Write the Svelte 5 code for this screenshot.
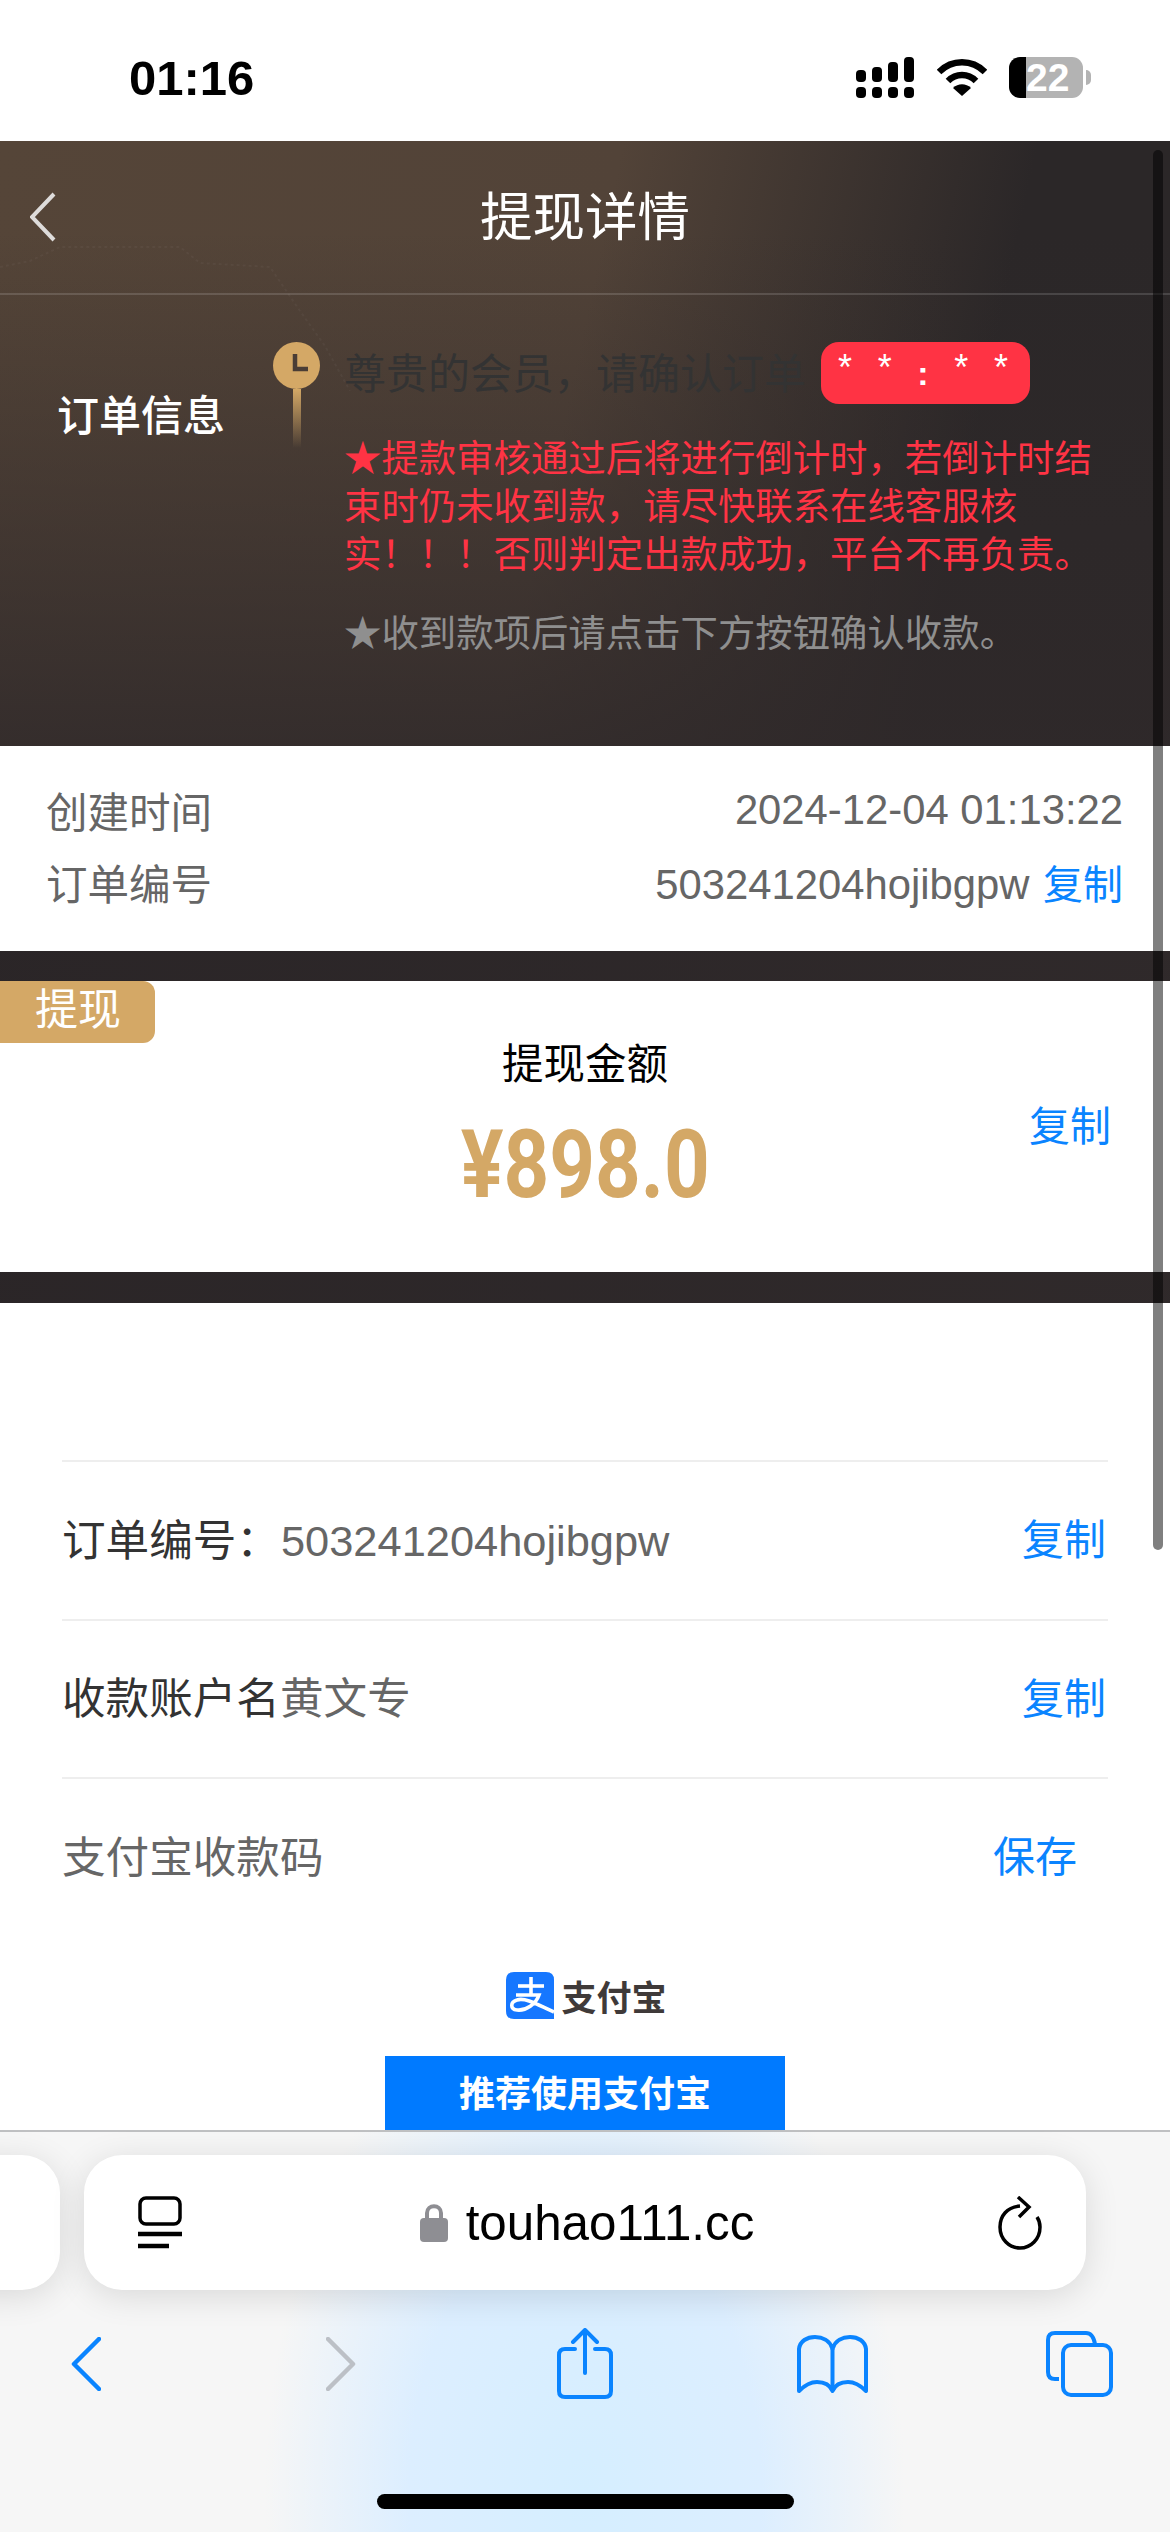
<script>
	const signal = [
		{ x: 0, y: 13, h: 12 },
		{ x: 16, y: 10, h: 15 },
		{ x: 32, y: 5, h: 20 },
		{ x: 48, y: 0, h: 25 }
	];
</script>

<div class="page">
	<div class="status">
		<span class="time">01:16</span>
		<div class="status-icons">
			<svg width="58" height="41" viewBox="0 0 58 41">
				{#each signal as s}
					<rect x={s.x} y={s.y} width="10" height={s.h} rx="4" />
					<rect x={s.x} y="30" width="10" height="11" rx="4" />
				{/each}
			</svg>
			<svg class="wifi" width="50" height="38" viewBox="0 0 50 38" fill="none" stroke="#000">
				<path d="M2 14 C15 1 35 1 48 14" stroke-width="6.5" />
				<path d="M11 23 C19 15 31 15 39 23" stroke-width="6.5" />
				<path d="M25 38 L16 30 C21 25 29 25 34 30 Z" fill="#000" stroke="none" />
			</svg>
			<div class="battery">
				<div class="battery-used"></div>
				<div class="battery-rest">22</div>
				<div class="battery-nub"></div>
			</div>
		</div>
	</div>

	<div class="scroll">
		<div class="hero">
			<svg class="map" width="420" height="190" viewBox="0 0 420 190" fill="none">
				<path d="M0 66 L30 60 L60 46 L180 46 L200 62 L270 66 L300 110 L325 145 L350 190" stroke="#fff" stroke-opacity="0.035" stroke-width="2" stroke-dasharray="3 3" />
			</svg>
			<header class="nav">
				<svg class="back" width="26" height="50" viewBox="0 0 26 50" fill="none">
					<path d="M24 2 L2 25 L24 48" stroke="#dedcdb" stroke-width="4" />
				</svg>
				<h1>提现详情</h1>
				<span></span>
			</header>
			<div class="info">
				<div class="info-label">订单信息</div>
				<div class="timeline">
					<svg width="47" height="47" viewBox="0 0 47 47">
						<circle cx="23.5" cy="23.5" r="23.5" fill="#d4a866" />
						<path d="M22 12 V27 H35" fill="none" stroke="#4a3d35" stroke-width="4.5" />
					</svg>
					<div class="stem"></div>
				</div>
				<div class="info-text">
					<div class="greeting">尊贵的会员，请确认订单</div>
					<div class="countdown">
						<span>*</span><span>*</span><span class="colon">:</span><span>*</span><span>*</span>
					</div>
					<p class="warn">★提款审核通过后将进行倒计时，若倒计时结束时仍未收到款，请尽快联系在线客服核实！！！否则判定出款成功，平台不再负责。</p>
					<p class="hint">★收到款项后请点击下方按钮确认收款。</p>
				</div>
			</div>
		</div>

		<section class="times">
			<div class="time-row">
				<span>创建时间</span>
				<span class="val">2024-12-04 01:13:22</span>
			</div>
			<div class="time-row">
				<span>订单编号</span>
				<span class="val">503241204hojibgpw <a href="#copy">复制</a></span>
			</div>
		</section>

		<div class="band"></div>

		<section class="amount">
			<div class="tag">提现</div>
			<div class="amount-title">提现金额</div>
			<div class="amount-num"><span>¥898.0</span></div>
			<a class="amount-copy" href="#copy">复制</a>
		</section>

		<div class="band band-2"></div>

		<section class="pay">
			<div class="pay-row">
				<span class="pay-label">订单编号：<span class="pay-val first">503241204hojibgpw</span></span>
				<a href="#copy">复制</a>
			</div>
			<div class="pay-row">
				<span class="pay-label">收款账户名<span class="pay-val">黄文专</span></span>
				<a href="#copy">复制</a>
			</div>
			<div class="pay-row last">
				<span class="pay-val">支付宝收款码</span>
				<a class="save" href="#save">保存</a>
			</div>

			<div class="alipay">
				<svg width="48" height="47" viewBox="0 0 48 47" fill="none">
					<path d="M8 0 H40 Q48 0 48 8 V47 H8 Q0 47 0 39 V8 Q0 0 8 0 Z" fill="#1677ff" />
					<g stroke="#fff" stroke-width="3.6">
						<path d="M12 14 H38" />
						<path d="M25 5 V22" />
						<path d="M10 23 H33 C30 32 20 39 11 38 C4 37 4 30 11 28 C20 25 34 34 48 40" />
					</g>
				</svg>
				<span>支付宝</span>
			</div>
			<div class="recommend">推荐使用支付宝</div>
		</section>
	</div>

	<div class="scrollbar"></div>

	<div class="toolbar">
		<div class="url-row">
			<div class="pill-prev"></div>
			<div class="pill">
				<svg width="44" height="53" viewBox="0 0 44 53" fill="none" stroke="#000">
					<rect x="2" y="2" width="40" height="26" rx="6" stroke-width="3.5" />
					<path d="M0 38 H44" stroke-width="4.5" />
					<path d="M0 50 H31" stroke-width="4.5" />
				</svg>
				<div class="address">
					<svg width="28" height="39" viewBox="0 0 28 39">
						<path d="M7 18 V10 C7 1 21 1 21 10 V18" fill="none" stroke="#8e8e93" stroke-width="4" />
						<rect y="15" width="28" height="24" rx="4" fill="#8e8e93" />
					</svg>
					<span>touhao111.cc</span>
				</div>
				<svg width="44" height="54" viewBox="0 0 44 54" fill="none" stroke="#000" stroke-width="3.5">
					<path d="M22 10 C9 11 2 20 2 31 C2 43 11 52 22 52 C33 52 42 43 42 31 C42 27 41 24 39 21" />
					<path d="M20 1 L31 11 L21 21" />
				</svg>
			</div>
		</div>

		<div class="tools">
			<svg class="t-back" width="30" height="54" viewBox="0 0 30 54" fill="none" stroke="#0a84ff" stroke-width="4.5" stroke-linecap="round" stroke-linejoin="round">
				<path d="M28 2 L3 27 L28 52" />
			</svg>
			<svg class="t-fwd" width="30" height="54" viewBox="0 0 30 54" fill="none" stroke="#bcc0c6" stroke-width="4.5" stroke-linecap="round" stroke-linejoin="round">
				<path d="M2 2 L27 27 L2 52" />
			</svg>
			<svg class="t-share" width="56" height="71" viewBox="0 0 56 71" fill="none" stroke="#0a84ff" stroke-width="4" stroke-linecap="round" stroke-linejoin="round">
				<path d="M18 21 H8 Q2 21 2 27 V63 Q2 69 8 69 H48 Q54 69 54 63 V27 Q54 21 48 21 H38" />
				<path d="M28 45 V3" />
				<path d="M16 14 L28 2 L40 14" />
			</svg>
			<svg class="t-book" width="71" height="58" viewBox="0 0 71 58" fill="none" stroke="#0a84ff" stroke-width="4" stroke-linejoin="round">
				<path d="M35.5 14 C33 5 25 2 18 2 C10 2 3 6 2 14 V56 C8 50 14 47 20 47 C27 47 33 50 35.5 56 C38 50 44 47 51 47 C57 47 63 50 69 56 V14 C68 6 61 2 53 2 C46 2 38 5 35.5 14 Z" />
				<path d="M35.5 14 V54" />
			</svg>
			<svg class="t-tabs" width="67" height="66" viewBox="0 0 67 66" fill="none" stroke="#0a84ff" stroke-width="4">
				<path d="M13 48 H9 Q2 48 2 41 V9 Q2 2 9 2 H40 Q47 2 49 13" />
				<rect x="17" y="14" width="48" height="50" rx="8" />
			</svg>
		</div>

		<div class="home"></div>
	</div>
</div>

<style>
	:global(body) {
		margin: 0;
		background: #fff;
	}

	.page {
		position: relative;
		width: 1170px;
		height: 2532px;
		display: flex;
		flex-direction: column;
		overflow: hidden;
		font-family: 'Liberation Sans', 'Noto Sans CJK SC', sans-serif;
	}

	a {
		color: #0a84ff;
		text-decoration: none;
	}

	/* status bar */
	.status {
		height: 141px;
		flex: none;
		background: #fff;
		display: flex;
		justify-content: space-between;
		padding: 57px 87px 0 129px;
		box-sizing: border-box;
	}

	.time {
		font-size: 49px;
		font-weight: 700;
		line-height: 42px;
		color: #000;
	}

	.status-icons {
		display: flex;
		align-items: flex-start;
		gap: 23px;
		height: 41px;
	}

	.wifi {
		margin-top: 1px;
	}

	.battery {
		display: flex;
		position: relative;
		width: 74px;
		height: 41px;
		margin-left: -1px;
	}

	.battery-used {
		width: 17px;
		background: #000;
		border-radius: 11px 0 0 11px;
	}

	.battery-rest {
		flex: 1;
		background: #b3b3b3;
		border-radius: 0 11px 11px 0;
		color: #fff;
		font-size: 39px;
		font-weight: 700;
		line-height: 41px;
	}

	.battery-nub {
		position: absolute;
		left: 77px;
		top: 13px;
		width: 5px;
		height: 15px;
		background: #b3b3b3;
		border-radius: 0 8px 8px 0;
	}

	/* scrolled page */
	.scroll {
		flex: 1;
		min-height: 0;
		overflow: hidden;
		background: linear-gradient(100deg, #2a2527, #302a2b);
	}

	.hero {
		position: relative;
		height: 605px;
		background:
			linear-gradient(to bottom, rgba(47, 41, 42, 0) 15%, rgba(47, 41, 42, 0.85) 100%),
			linear-gradient(102deg, #554538 0%, #524338 48%, #2b2728 80%, #2b2728 100%);
	}

	.map {
		position: absolute;
		left: 0;
		top: 60px;
	}

	.nav {
		position: relative;
		height: 154px;
		box-sizing: border-box;
		border-bottom: 2px solid rgba(255, 255, 255, 0.14);
		display: grid;
		grid-template-columns: 1fr auto 1fr;
		align-items: center;
	}

	.back {
		margin: -1px 0 0 30px;
	}

	h1 {
		margin: 2px 0 0;
		font-size: 52.5px;
		font-weight: 400;
		color: #fff;
		line-height: 60px;
	}

	.info {
		position: relative;
		display: flex;
		padding: 47px 0 0 57px;
	}

	.info-label {
		width: 216px;
		flex: none;
		margin-top: 47px;
		font-size: 42px;
		line-height: 56px;
		font-weight: 500;
		color: #fff;
	}

	.timeline {
		width: 47px;
		flex: none;
		display: flex;
		flex-direction: column;
		align-items: center;
	}

	.timeline svg {
		display: block;
	}

	.stem {
		width: 8px;
		height: 59px;
		background: linear-gradient(to bottom, #d4a866, rgba(212, 168, 102, 0));
	}

	.info-text {
		position: relative;
		width: 760px;
		margin-left: 24px;
		padding-top: 4px;
	}

	.greeting {
		font-size: 42px;
		line-height: 58px;
		color: #333;
	}

	.countdown {
		position: absolute;
		left: 477px;
		top: 0;
		width: 209px;
		height: 62px;
		background: #ff3344;
		border-radius: 18px;
		display: flex;
		justify-content: space-between;
		padding: 8px 22px 0 17px;
		box-sizing: border-box;
		color: #fff;
		font-size: 36px;
		line-height: 36px;
	}

	.colon {
		font-size: 34px;
		margin-top: 5px;
		font-weight: 700;
	}

	.warn {
		margin: 31px 0 0;
		font-size: 37.4px;
		line-height: 48px;
		color: #ff3344;
	}

	.hint {
		margin: 31px 0 0;
		font-size: 37.4px;
		line-height: 48px;
		color: #8f8f8f;
	}

	/* order times */
	.times {
		background: #fff;
		height: 205px;
		box-sizing: border-box;
		padding: 28px 47px 0 46px;
	}

	.time-row {
		display: flex;
		justify-content: space-between;
		align-items: center;
		height: 72px;
		font-size: 41.5px;
		color: #666;
	}

	.val {
		font-size: 41.8px;
	}

	.val a {
		font-size: 40px;
		margin-left: 2px;
	}

	.band {
		height: 30px;
	}

	.band-2 {
		height: 31px;
	}

	/* amount */
	.amount {
		position: relative;
		background: #fff;
		height: 291px;
		box-sizing: border-box;
		padding: 55px 59px 0 0;
		display: grid;
		grid-template-columns: 1fr 246px 1fr;
		grid-template-rows: 58px 116px;
		justify-items: center;
	}

	.tag {
		position: absolute;
		left: 0;
		top: 0;
		width: 155px;
		height: 62px;
		box-sizing: border-box;
		padding-left: 35px;
		background: #d4a866;
		border-radius: 0 12px 12px 0;
		color: #fff;
		font-size: 43px;
		line-height: 58px;
	}

	.amount-title {
		grid-column: 2;
		margin-left: 59px;
		font-size: 41.5px;
		line-height: 58px;
		color: #000;
		white-space: nowrap;
	}

	.amount-num {
		grid-column: 2;
		grid-row: 2;
		margin: 13px 0 0 59px;
		font-size: 95px;
		font-weight: 700;
		font-family: Roboto, 'Liberation Sans', sans-serif;
		line-height: 116px;
		color: #d4a866;
		white-space: nowrap;
	}

	.amount-num span {
		display: inline-block;
		transform: scaleX(0.84);
	}

	.amount-copy {
		grid-column: 3;
		grid-row: 1 / span 2;
		justify-self: end;
		align-self: center;
		margin-top: 8px;
		font-size: 41px;
		line-height: 58px;
	}

	/* payment details */
	.pay {
		background: #fff;
		padding: 157px 62px 0 62px;
		height: 900px;
		box-sizing: border-box;
	}

	.pay-row {
		height: 158.5px;
		box-sizing: border-box;
		border-top: 2px solid #eee;
		padding-bottom: 7px;
		display: flex;
		justify-content: space-between;
		align-items: center;
		font-size: 43.6px;
		color: #333;
	}

	.pay-row a {
		margin-right: 2px;
		font-size: 42px;
	}

	.pay-row a.save {
		margin-right: 31px;
	}

	.pay-val {
		color: #666;
	}

	.pay-val.first {
		margin-left: 1px;
		font-size: 43.4px;
	}

	.alipay {
		margin-top: 36px;
		display: flex;
		justify-content: center;
		align-items: center;
		gap: 7px;
		height: 47px;
		padding-left: 3px;
		font-size: 35px;
		font-weight: 700;
		color: #3f3a39;
	}

	.recommend {
		margin: 37px auto 0 323px;
		width: 400px;
		height: 100px;
		padding-top: 12px;
		box-sizing: border-box;
		background: #007aff;
		color: #fff;
		font-size: 36px;
		font-weight: 700;
		line-height: 54px;
		text-align: center;
	}

	/* page scroll indicator */
	.scrollbar {
		position: absolute;
		left: 1153px;
		top: 150px;
		width: 10px;
		height: 1400px;
		border-radius: 5px;
		background: rgba(0, 0, 0, 0.5);
	}

	/* safari chrome */
	.toolbar {
		position: relative;
		flex: none;
		height: 402px;
		box-sizing: border-box;
		border-top: 2px solid #bfc0c2;
		background:
			radial-gradient(ellipse 320px 520px at 50% 90%, #d5eeff 0%, #dceeff 55%, rgba(226, 240, 255, 0) 100%),
			#f6f6f6;
	}

	.url-row {
		display: flex;
		gap: 24px;
		padding-top: 23px;
		margin-left: -140px;
	}

	.pill-prev,
	.pill {
		height: 135px;
		border-radius: 38px;
		background: #fff;
		box-shadow: 0 6px 34px rgba(0, 0, 0, 0.12);
		flex: none;
	}

	.pill-prev {
		width: 200px;
	}

	.pill {
		width: 1002px;
		box-sizing: border-box;
		padding: 0 44px 0 54px;
		display: flex;
		justify-content: space-between;
		align-items: center;
	}

	.address {
		display: flex;
		align-items: center;
		gap: 18px;
		font-size: 49.3px;
		color: #000;
		margin-right: 6px;
	}

	.tools {
		display: flex;
		align-items: center;
		height: 71px;
		margin-top: 38px;
	}

	.t-back {
		margin-left: 71px;
	}

	.t-fwd {
		margin-left: 225px;
	}

	.t-share {
		margin-left: 201px;
	}

	.t-book {
		margin-left: 184px;
	}

	.t-tabs {
		margin-left: 178px;
	}

	.home {
		width: 417px;
		height: 15px;
		margin: 95px 0 0 377px;
		background: #000;
		border-radius: 8px;
	}
</style>
